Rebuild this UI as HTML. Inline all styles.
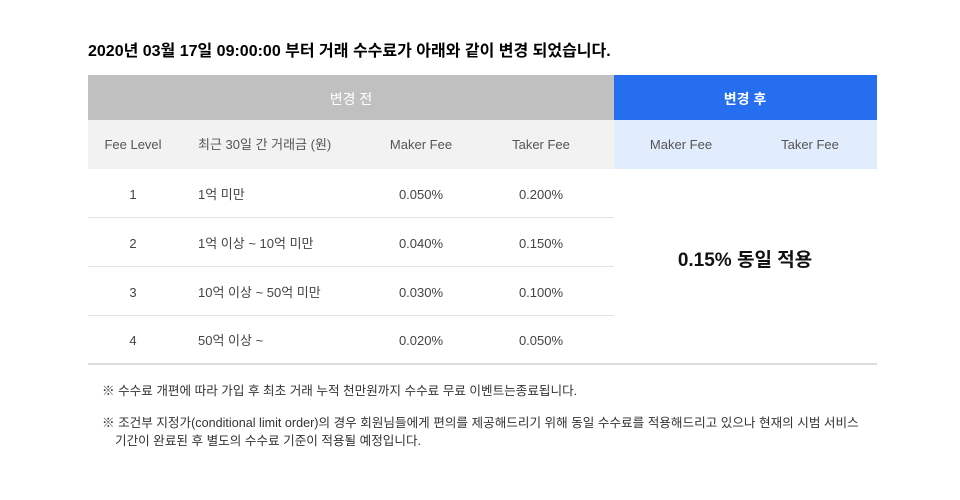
<!DOCTYPE html>
<html><head><meta charset="utf-8"><style>
body{margin:0;background:#fff;width:960px;height:500px;overflow:hidden;font-family:"Liberation Sans","Noto Sans CJK KR",sans-serif;position:relative}
.a{position:absolute;white-space:nowrap;line-height:16px}
.t{left:88px;top:44px;font-size:16px;font-weight:bold;color:#000}
.c{text-align:center;transform:translateX(-50%)}
.s{font-size:13px;color:#555}
.d{font-size:13px;color:#444}
.n{font-size:12.6px;color:#333}
</style></head><body>
<div class="a t">2020년 03월 17일 09:00:00 부터 거래 수수료가 아래와 같이 변경 되었습니다.</div>
<div class="a" style="left:88px;top:75px;width:526px;height:45px;background:#c0c0c0"></div>
<div class="a" style="left:614px;top:75px;width:263px;height:45px;background:#256ef0"></div>
<div class="a" style="left:88px;top:120px;width:526px;height:49px;background:#f2f2f2"></div>
<div class="a" style="left:614px;top:120px;width:263px;height:49px;background:#e1ecfd"></div>
<div class="a c" style="left:351px;top:91px;font-size:14px;color:#fff">변경 전</div>
<div class="a c" style="left:745px;top:91px;font-size:14px;color:#fff;font-weight:bold">변경 후</div>
<div class="a c s" style="left:133px;top:137px">Fee Level</div>
<div class="a s" style="left:198px;top:137px">최근 30일 간 거래금 (원)</div>
<div class="a c s" style="left:421px;top:137px">Maker Fee</div>
<div class="a c s" style="left:541px;top:137px">Taker Fee</div>
<div class="a c s" style="left:681px;top:137px">Maker Fee</div>
<div class="a c s" style="left:810px;top:137px">Taker Fee</div>
<div class="a" style="left:88px;top:217px;width:526px;height:1px;background:#e4e4e4"></div>
<div class="a" style="left:88px;top:266px;width:526px;height:1px;background:#e4e4e4"></div>
<div class="a" style="left:88px;top:315px;width:526px;height:1px;background:#e4e4e4"></div>
<div class="a" style="left:88px;top:363px;width:789px;height:2px;background:#ddd"></div>
<div class="a c d" style="left:133px;top:187px">1</div>
<div class="a d" style="left:198px;top:187px">1억 미만</div>
<div class="a c d" style="left:421px;top:187px">0.050%</div>
<div class="a c d" style="left:541px;top:187px">0.200%</div>
<div class="a c d" style="left:133px;top:236px">2</div>
<div class="a d" style="left:198px;top:236px">1억 이상 ~ 10억 미만</div>
<div class="a c d" style="left:421px;top:236px">0.040%</div>
<div class="a c d" style="left:541px;top:236px">0.150%</div>
<div class="a c d" style="left:133px;top:285px">3</div>
<div class="a d" style="left:198px;top:285px">10억 이상 ~ 50억 미만</div>
<div class="a c d" style="left:421px;top:285px">0.030%</div>
<div class="a c d" style="left:541px;top:285px">0.100%</div>
<div class="a c d" style="left:133px;top:333px">4</div>
<div class="a d" style="left:198px;top:333px">50억 이상 ~</div>
<div class="a c d" style="left:421px;top:333px">0.020%</div>
<div class="a c d" style="left:541px;top:333px">0.050%</div>
<div class="a c" style="left:745px;top:251px;font-size:19px;line-height:20px;font-weight:bold;color:#111">0.15% 동일 적용</div>
<div class="a n" style="left:102px;top:383px">※ 수수료 개편에 따라 가입 후 최초 거래 누적 천만원까지 수수료 무료 이벤트는종료됩니다.</div>
<div class="a n" style="left:102px;top:415px">※ 조건부 지정가(conditional limit order)의 경우 회원님들에게 편의를 제공해드리기 위해 동일 수수료를 적용해드리고 있으나 현재의 시범 서비스</div>
<div class="a n" style="left:115px;top:433px">기간이 완료된 후 별도의 수수료 기준이 적용될 예정입니다.</div>
</body></html>
